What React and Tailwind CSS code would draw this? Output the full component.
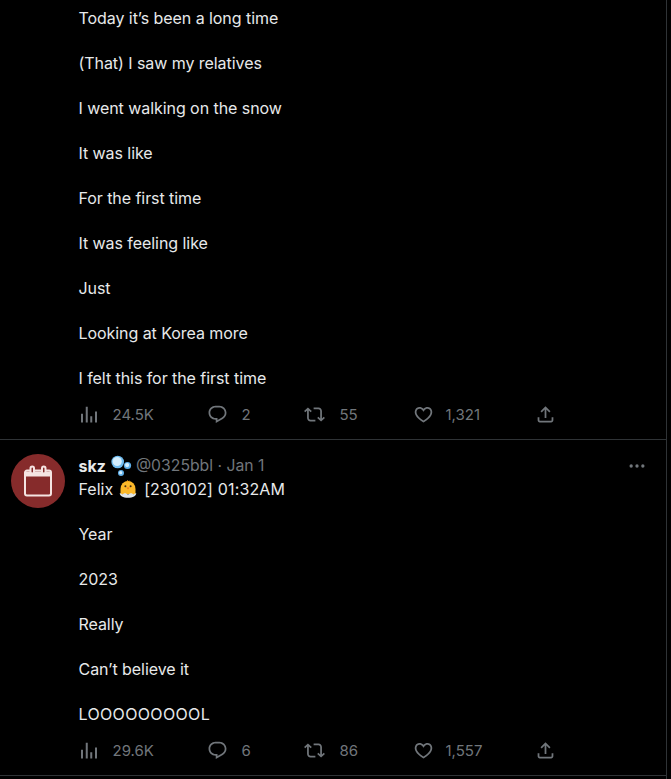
const paths = {
  views: 'M8.75 21V3h2v18h-2zM18 21V8.5h2V21h-2zM4 21l.004-10h2L6 21H4zm9.248 0v-7h2v7h-2z',
  reply: 'M1.751 10c0-4.42 3.584-8 8.005-8h4.366c4.49 0 8.129 3.64 8.129 8.13 0 2.96-1.607 5.68-4.196 7.11l-8.054 4.46v-3.69h-.067c-4.49.1-8.183-3.51-8.183-8.01zm8.005-6c-3.317 0-6.005 2.69-6.005 6 0 3.37 2.77 6.08 6.138 6.01l.351-.01h1.761v2.3l5.087-2.81c1.951-1.08 3.163-3.13 3.163-5.36 0-3.39-2.744-6.13-6.129-6.13H9.756z',
  retweet: 'M4.5 3.88l4.432 4.14-1.364 1.46L5.5 7.55V16c0 1.1.896 2 2 2H13v2H7.5c-2.209 0-4-1.79-4-4V7.55L1.432 9.48.068 8.02 4.5 3.88zM16.5 6H11V4h5.5c2.209 0 4 1.79 4 4v8.45l2.068-1.93 1.364 1.46-4.432 4.14-4.432-4.14 1.364-1.46 2.068 1.93V8c0-1.1-.896-2-2-2z',
  like: 'M16.697 5.5c-1.222-.06-2.679.51-3.89 2.16l-.805 1.09-.806-1.09C9.984 6.01 8.526 5.44 7.304 5.5c-1.243.07-2.349.78-2.91 1.91-.552 1.12-.633 2.78.479 4.82 1.074 1.97 3.257 4.27 7.129 6.61 3.87-2.34 6.052-4.64 7.126-6.61 1.111-2.04 1.03-3.7.477-4.82-.561-1.13-1.666-1.84-2.908-1.91zm4.187 7.69c-1.351 2.48-4.001 5.12-8.379 7.67l-.503.3-.504-.3c-4.379-2.55-7.029-5.19-8.382-7.67-1.36-2.5-1.41-4.86-.514-6.67.887-1.79 2.647-2.91 4.601-3.01 1.651-.09 3.368.56 4.798 2.01 1.429-1.45 3.146-2.1 4.796-2.01 1.954.1 3.714 1.22 4.601 3.01.896 1.81.846 4.17-.514 6.67z',
  share: 'M12 2.59l5.7 5.7-1.41 1.42L13 6.41V16h-2V6.41l-3.3 3.3-1.41-1.42L12 2.59zM21 15l-.02 3.51c0 1.38-1.12 2.49-2.5 2.49H5.5C4.11 21 3 19.88 3 18.5V15h2v3.5c0 .28.22.5.5.5h12.98c.28 0 .5-.22.5-.5L19 15h2z',
};

function Icon({ name }) {
  // the views glyph sits wider in the reference than the others
  if (name === 'views') {
    return (
      <svg viewBox="3 0 18 24" preserveAspectRatio="none" className="w-[18px] h-[21px] ml-[1px] shrink-0 fill-[#71767b]">
        <path d={paths.views} />
      </svg>
    );
  }
  return (
    <svg viewBox="0 0 24 24" className="w-[21px] h-[21px] shrink-0 fill-[#71767b]">
      <path d={paths[name]} />
    </svg>
  );
}

function Action({ name, value, className }) {
  return (
    <div className={`flex items-center ${className}`}>
      <Icon name={name} />
      {value && <span className="text-[#71767b] text-[15px] leading-5">{value}</span>}
    </div>
  );
}

function Actions({ views, replies, retweets, likes }) {
  return (
    <div className="flex items-center h-[21px]">
      <Action name="views" value={views} className="w-[128px] [&>span]:ml-[15px]" />
      <Action name="reply" value={replies} className="w-[97px] [&>span]:ml-[14px]" />
      <Action name="retweet" value={retweets} className="w-[109px] [&>span]:ml-[15px]" />
      <Action name="like" value={likes} className="w-[122px] [&>span]:ml-3" />
      <Action name="share" />
    </div>
  );
}

function Lines({ lines }) {
  return (
    <div className="flex flex-col gap-[25px] text-[#e7e9ea] text-[16px] leading-5 font-[415] tracking-[-0.06px]">
      {lines.map(l => <p key={l} className={l.startsWith('LOO') ? 'tracking-[0.35px]' : undefined}>{l}</p>)}
    </div>
  );
}

function Bubbles() {
  return (
    <svg viewBox="0 0 22 22" className="w-[22px] h-[22px] mx-1 shrink-0">
      <circle cx="7.700" cy="7" r="6.300" fill="#6fbcf0" />
      <circle cx="7.200" cy="6.500" r="4.600" fill="#d3edfd" />
      <circle cx="17.500" cy="10.500" r="3.600" fill="#5fb0ea" />
      <circle cx="17.100" cy="10.100" r="2.100" fill="#d3edfd" />
      <circle cx="11" cy="18" r="3" fill="#5fb0ea" />
      <circle cx="10.700" cy="17.700" r="1.600" fill="#d3edfd" />
    </svg>
  );
}

function Chick() {
  return (
    <svg viewBox="0 0 18 18" className="w-[18px] h-[18px] ml-[6px] mr-[7px] shrink-0">
      <path d="M1.500 9a7.500 8 0 0 1 15 0v5h-15z" fill="#fbb829" />
      <path d="M7.600 1.600l1-1.500 .9 1.100 1-1-.2 1.800H7.600z" fill="#f9a61a" />
      <circle cx="6.400" cy="6.200" r="1" fill="#3f2a14" />
      <circle cx="11.600" cy="6.200" r="1" fill="#3f2a14" />
      <path d="M7.400 7.600h3.200L9 9.600z" fill="#f0761e" />
      <path d="M.800 13l2.600 1.200L6 13l3 1.400L12 13l2.600 1.200L17.200 13c.2 2.800-3.200 4.800-8.200 4.800S.600 15.800.800 13z" fill="#dfe5e8" />
    </svg>
  );
}

export default function App() {
  return (
    <div className="w-full h-[779px] overflow-hidden bg-black font-['Inter','Liberation_Sans',sans-serif]">
      <div className="w-[667px] h-full border-r border-[#2f3336]">
        {/* tail of the tweet scrolled off the top */}
        <div className="h-[440px] pl-[78.500px] pt-2 border-b border-[#2f3336]">
          <Lines lines={[
            'Today it’s been a long time',
            '(That) I saw my relatives',
            'I went walking on the snow',
            'It was like',
            'For the first time',
            'It was feeling like',
            'Just',
            'Looking at Korea more',
            'I felt this for the first time',
          ]} />
          <div className="mt-4">
            <Actions views="24.5K" replies="2" retweets="55" likes="1,321" />
          </div>
        </div>

        <div className="h-[336px] flex border-b border-[#2f3336]">
          <div className="w-[78.500px] shrink-0 pl-[11px] pt-[14px]">
            <div className="w-[54px] h-[54px] rounded-full bg-[#862b2b] flex items-center justify-center">
              <svg viewBox="0 0 32 32" className="w-8 h-8" fill="none" stroke="#f5e4e2" strokeWidth="2">
                <path d="M3 7.500a2 2 0 0 1 2-2h22a2 2 0 0 1 2 2v21a2 2 0 0 1-2 2H5a2 2 0 0 1-2-2z" />
                <path d="M3 9h26" strokeWidth="5" />
                <rect x="8.500" y="1.500" width="3.500" height="7" rx="1.750" fill="#862b2b" />
                <rect x="20" y="1.500" width="3.500" height="7" rx="1.750" fill="#862b2b" />
              </svg>
            </div>
          </div>
          <div className="flex-1 pt-4 pr-5">
            <div className="flex items-center h-5 text-[16px] leading-5 relative">
              <span className="font-bold text-[#e7e9ea]">skz</span>
              <Bubbles />
              <span className="text-[#71767b] text-[15.750px]">@0325bbl · Jan 1</span>
              <svg viewBox="0 0 24 24" className="absolute right-[-1px] top-0 w-5 h-5 fill-[#71767b]">
                <circle cx="5" cy="12" r="2" />
                <circle cx="12" cy="12" r="2" />
                <circle cx="19" cy="12" r="2" />
              </svg>
            </div>
            <div className="flex items-center h-5 mt-[3px] text-[#e7e9ea] text-[16px] leading-5 font-[415]">
              Felix<Chick /><span className="tracking-[0.15px]">[230102] 01:32AM</span>
            </div>
            <div className="mt-[25px]">
              <Lines lines={['Year', '2023', 'Really', 'Can’t believe it', 'LOOOOOOOOOL']} />
            </div>
            <div className="mt-4">
              <Actions views="29.6K" replies="6" retweets="86" likes="1,557" />
            </div>
          </div>
        </div>
      </div>
    </div>
  );
}
